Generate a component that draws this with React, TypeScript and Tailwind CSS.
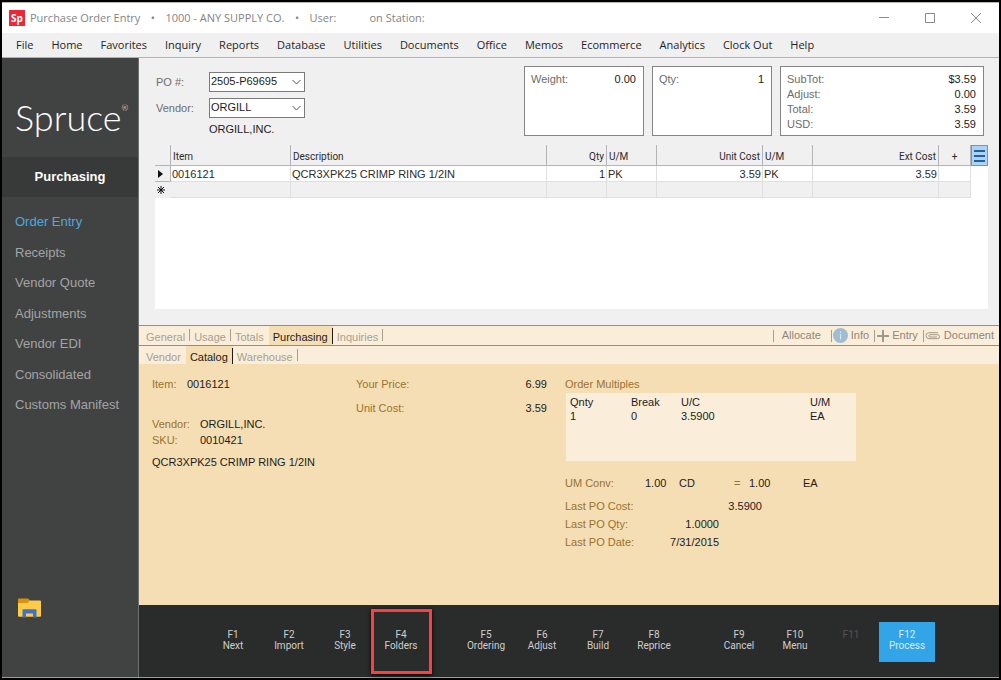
import { useState } from 'react'
import clsx from 'clsx'

const menuItems = [
  'File', 'Home', 'Favorites', 'Inquiry', 'Reports', 'Database', 'Utilities', 'Documents',
  'Office', 'Memos', 'Ecommerce', 'Analytics', 'Clock Out', 'Help',
]

const navItems = [
  'Order Entry', 'Receipts', 'Vendor Quote', 'Adjustments', 'Vendor EDI', 'Consolidated', 'Customs Manifest',
]

const functionKeys = [
  [
    { id: 'F1', label: 'Next' },
    { id: 'F2', label: 'Import' },
    { id: 'F3', label: 'Style' },
    { id: 'F4', label: 'Folders' },
  ],
  [
    { id: 'F5', label: 'Ordering' },
    { id: 'F6', label: 'Adjust' },
    { id: 'F7', label: 'Build' },
    { id: 'F8', label: 'Reprice' },
  ],
  [
    { id: 'F9', label: 'Cancel' },
    { id: 'F10', label: 'Menu' },
    { id: 'F11', label: '' },
    { id: 'F12', label: 'Process' },
  ],
]

function TitleBar() {
  return (
    <header className="flex h-[31px] items-center border-t border-[#b9b6ae] bg-white pl-[7px] font-['Open_Sans',sans-serif] text-[11px] text-[#858585]">
      <div className="flex size-4 items-center justify-center bg-[#ee2737] text-[10px] font-bold leading-none text-white">
        Sp
      </div>
      <h1 className="ml-[5px] flex whitespace-pre">
        <span>Purchase Order Entry</span>
        <span className="w-[25px] text-center">•</span>
        <span>1000 - ANY SUPPLY CO.</span>
        <span className="w-[25px] text-center">•</span>
        <span className="w-[60px]">User:</span>
        <span>on Station:</span>
      </h1>
      <div className="ml-auto flex">
        <button type="button" aria-label="Minimize" className="flex h-7 w-[46px] items-center justify-center">
          <svg width="11" height="11" viewBox="0 0 11 11" stroke="#8a8a8a" fill="none">
            <path d="M0 4.500h10" />
          </svg>
        </button>
        <button type="button" aria-label="Maximize" className="flex h-7 w-[46px] items-center justify-center">
          <svg width="11" height="11" viewBox="0 0 11 11" stroke="#8a8a8a" fill="none">
            <path d="M.5 .5h9v9h-9z" />
          </svg>
        </button>
        <button type="button" aria-label="Close" className="flex h-7 w-[46px] items-center justify-center">
          <svg width="11" height="11" viewBox="0 0 11 11" stroke="#8a8a8a" fill="none">
            <path d="M0 0l10 10M10 0L0 10" />
          </svg>
        </button>
      </div>
    </header>
  )
}

function MenuBar() {
  return (
    <nav className="flex h-[25px] items-center gap-[18px] border-b border-[#adb5b1] bg-[#f0f0f0] pl-[14px] font-['Open_Sans',sans-serif] text-[11px] text-[#1f1f1f]">
      {menuItems.map((item) => (
        <button key={item} type="button" className="whitespace-nowrap">{item}</button>
      ))}
    </nav>
  )
}

function Sidebar() {
  return (
    <aside className="flex w-[137px] shrink-0 flex-col border-r border-[#6f7070] bg-[#414342] text-[13px]">
      <div className="flex h-[99px] items-center pl-[13px] pt-[18px] font-['Lato',sans-serif] text-[36px] font-light leading-none text-white">
        Spruce
        <span className="self-start pt-7 text-[8px]">®</span>
      </div>
      <h2 className="flex h-10 items-center justify-center bg-[#383a39] font-bold text-white">Purchasing</h2>
      <ul className="mt-[10px] flex h-[213px] flex-col pl-[13px]">
        {navItems.map((item, i) => (
          <li key={item} className="flex flex-1 items-center">
            <a href="#" className={i === 0 ? 'text-[#4fa9dc]' : 'text-[#a3a4a4]'}>{item}</a>
          </li>
        ))}
      </ul>
      <button type="button" aria-label="Files" className="mb-[59px] ml-4 mt-auto w-[23px]">
        <svg width="23" height="20" viewBox="0 0 23 20">
          <path d="M0 1.500Q0 .5 1 .5h9l2 2V5H0z" fill="#d9930b" />
          <path d="M0 5h9.500l2-2.500H22Q23 2.500 23 3.500V18q0 .8-1 .8H1Q0 18.800 0 18z" fill="#fccb48" />
          <path d="M4.500 12q0-.8.8-.8h12.400q.8 0 .8.800v7.500H15V15.500H8v4H4.500z" fill="#3f72c9" />
        </svg>
      </button>
    </aside>
  )
}

function Combo({ id, value }: { id: string; value: string }) {
  return (
    <div className="relative w-24">
      <select id={id} defaultValue={value} className="h-5 w-full appearance-none rounded-none border border-[#7a7a7a] bg-white pb-0.5 pl-px text-[11px] leading-4 text-[#1c1c1c]">
        <option>{value}</option>
      </select>
      <svg className="pointer-events-none absolute right-1 top-1.5" width="9" height="8" viewBox="0 0 9 8" fill="none" stroke="#555">
        <path d="M.5 2l4 4 4-4" />
      </svg>
    </div>
  )
}

function Amount({ label, value }: { label: string; value: string }) {
  return (
    <div className="flex justify-between leading-[15px]">
      <dt className="text-[#6d6d6d]">{label}</dt>
      <dd className="text-[#1c1c1c]">{value}</dd>
    </div>
  )
}

function OrderHeader() {
  return (
    <section className="flex justify-between pl-[17px] pr-[15px] pt-2">
      <div className="grid grid-cols-[53px_auto] content-start items-center gap-y-1.5 pt-1.5 text-[#6d6d6d]">
        <label htmlFor="po">PO #:</label>
        <Combo id="po" value="2505-P69695" />
        <label htmlFor="vendor">Vendor:</label>
        <Combo id="vendor" value="ORGILL" />
        <span className="col-start-2 leading-[11px] text-[#1c1c1c]">ORGILL,INC.</span>
      </div>
      <div className="flex h-[70px] gap-2">
        <dl className="w-[120px] border border-[#858585] bg-white pl-1.5 pr-[7px] pt-[5px]">
          <Amount label="Weight:" value="0.00" />
        </dl>
        <dl className="w-[120px] border border-[#858585] bg-white pl-1.5 pr-[7px] pt-[5px]">
          <Amount label="Qty:" value="1" />
        </dl>
        <dl className="w-[204px] border border-[#858585] bg-white pl-1.5 pr-[7px] pt-[5px]">
          <Amount label="SubTot:" value="$3.59" />
          <Amount label="Adjust:" value="0.00" />
          <Amount label="Total:" value="3.59" />
          <Amount label="USD:" value="3.59" />
        </dl>
      </div>
    </section>
  )
}

function LineItems() {
  const head = 'border-r border-b border-[#b4b4b4] bg-[#f0f0f0] px-0.5 pt-0.5 font-normal'
  const cell = 'border-r border-b border-[#dfdfdf] px-px pt-px'
  return (
    <section className="ml-4 mr-[11px] mt-[9px] flex h-[164px] items-start bg-white">
      <table className="flex-1 table-fixed border-separate border-spacing-0 text-[#2b2b2b]">
        <colgroup>
          <col className="w-4" />
          <col className="w-[120px]" />
          <col />
          <col className="w-[60px]" />
          <col className="w-[50px]" />
          <col className="w-[106px]" />
          <col className="w-[50px]" />
          <col className="w-[126px]" />
          <col className="w-8" />
        </colgroup>
        <thead className="font-['Roboto',sans-serif] text-[10px]">
          <tr className="h-[21px]">
            <th className={head} />
            <th className={clsx(head, 'text-left')}>Item</th>
            <th className={clsx(head, 'text-left')}>Description</th>
            <th className={clsx(head, 'text-right')}>Qty</th>
            <th className={clsx(head, 'text-left')}>U/M</th>
            <th className={clsx(head, 'text-right')}>Unit Cost</th>
            <th className={clsx(head, 'text-left')}>U/M</th>
            <th className={clsx(head, 'text-right')}>Ext Cost</th>
            <th className={clsx(head, 'text-center')}>+</th>
          </tr>
        </thead>
        <tbody className="text-[11px] leading-[14px]">
          <tr className="h-4">
            <td className="border-r border-b border-[#b4b4b4] bg-[#f0f0f0]">
              <svg className="ml-[3px]" width="5" height="8" viewBox="0 0 5 8">
                <path d="M0 0l5 4-5 4z" fill="#111" />
              </svg>
            </td>
            <td className={cell}>0016121</td>
            <td className={cell}>QCR3XPK25 CRIMP RING 1/2IN</td>
            <td className={clsx(cell, 'text-right')}>1</td>
            <td className={cell}>PK</td>
            <td className={clsx(cell, 'text-right')}>3.59</td>
            <td className={cell}>PK</td>
            <td className={clsx(cell, 'text-right')}>3.59</td>
            <td className={cell} />
          </tr>
          <tr className="h-4 bg-[#f0f0f0]">
            <td>
              <svg className="ml-0.5" width="8" height="8" viewBox="0 0 8 8" stroke="#111" fill="none">
                <path d="M4 0v8M0 4h8M1 1l6 6M7 1l-6 6" />
              </svg>
            </td>
            <td className={cell} />
            <td className={cell} />
            <td className={cell} />
            <td className={cell} />
            <td className={cell} />
            <td className={cell} />
            <td className={cell} />
            <td className={cell} />
          </tr>
        </tbody>
      </table>
      <button type="button" aria-label="Grid options" className="flex h-[21px] w-[17px] items-center justify-center border border-[#7d93a6] bg-[#aed2f3]">
        <svg width="11" height="12" viewBox="0 0 11 12" fill="#1e62a0">
          <path d="M0 0h11v2H0zM0 5h11v2H0zM0 10h11v2H0z" />
        </svg>
      </button>
    </section>
  )
}

interface TabStripProps {
  tabs: string[]
  active: string
  onSelect: (tab: string) => void
}

function TabStrip({ tabs, active, onSelect }: TabStripProps) {
  return (
    <div role="tablist" className="flex h-full pl-[3px]">
      {tabs.map((tab, i) => (
        <button
          key={tab}
          type="button"
          role="tab"
          aria-selected={tab === active}
          onClick={() => onSelect(tab)}
          className={clsx('flex pl-1', tab === active ? 'bg-[#f5deb3] text-[#1c1c1c]' : 'text-[#a89f91]')}
        >
          <span className="pr-1 pt-1 leading-[15px]">{tab}</span>
          {tab === active ? (
            <span className="mt-0.5 h-4 w-px bg-[#1c1c1c]" />
          ) : (
            <span className={clsx('mt-[3px] h-3 w-px', tabs[i + 1] !== active && 'bg-[#a89f91]')} />
          )}
        </button>
      ))}
    </div>
  )
}

function Divider() {
  return <span className="h-3 w-px bg-[#a89f91]" />
}

function TabActions() {
  return (
    <div className="flex items-center pr-[5px] text-[#8f8678]">
      <Divider />
      <button type="button" className="pl-2 pr-[10px]">Allocate</button>
      <Divider />
      <button type="button" className="flex items-center gap-[3px] pl-px pr-[5px]">
        <svg width="15" height="15" viewBox="0 0 15 15">
          <circle cx="7.500" cy="7.500" r="7.500" fill="#9fbcd2" />
          <path d="M7.500 3.500v1.500M7.500 6v5.500" stroke="#dbe7ef" strokeWidth="1.200" />
        </svg>
        Info
      </button>
      <Divider />
      <button type="button" className="flex items-center gap-[3px] pl-0.5 pr-[5px]">
        <svg width="12" height="12" viewBox="0 0 12 12" stroke="#a3998a" strokeWidth="2">
          <path d="M6 0v12M0 6h12" />
        </svg>
        Entry
      </button>
      <Divider />
      <button type="button" className="flex items-center gap-[3px] pl-px">
        <svg width="16" height="8" viewBox="0 0 16 8" fill="none" stroke="#a3998a">
          <path d="M12 5H5A1 1 0 015 2.700h7.500a2 2 0 010 4H4A3 3 0 014 .7h9" />
        </svg>
        Document
      </button>
    </div>
  )
}

function CatalogDetails() {
  const label = 'text-[#9a7231]'
  return (
    <section className="flex flex-1 items-start bg-[#f5deb3] pl-[13px] pt-3 leading-4 text-[#1c1c1c]">
      <div className="w-[204px]">
        <div className="flex">
          <span className={clsx(label, 'w-[35px]')}>Item:</span>
          0016121
        </div>
        <div className="mt-6 grid grid-cols-[48px_auto]">
          <span className={label}>Vendor:</span>
          <span>ORGILL,INC.</span>
          <span className={label}>SKU:</span>
          <span>0010421</span>
        </div>
        <p className="mt-1.5 whitespace-nowrap">QCR3XPK25 CRIMP RING 1/2IN</p>
      </div>

      <dl className="grid w-[191px] grid-cols-2 gap-y-2">
        <dt className={label}>Your Price:</dt>
        <dd className="text-right">6.99</dd>
        <dt className={label}>Unit Cost:</dt>
        <dd className="text-right">3.59</dd>
      </dl>

      <div className="ml-[18px] w-[291px]">
        <h3 className={label}>Order Multiples</h3>
        <div className="ml-px mt-px h-[68px] bg-[#faeedb] pl-1 pt-0.5">
          <table className="w-full table-fixed text-left leading-[14px]">
            <thead>
              <tr>
                <th className="w-[61px] font-normal">Qnty</th>
                <th className="w-[50px] font-normal">Break</th>
                <th className="w-[129px] font-normal">U/C</th>
                <th className="font-normal">U/M</th>
              </tr>
            </thead>
            <tbody>
              <tr>
                <td>1</td>
                <td>0</td>
                <td>3.5900</td>
                <td>EA</td>
              </tr>
            </tbody>
          </table>
        </div>
        <div className="mt-[14px] grid grid-cols-[80px_34px_55px_15px_54px_auto]">
          <span className={label}>UM Conv:</span>
          <span>1.00</span>
          <span>CD</span>
          <span className={label}>=</span>
          <span>1.00</span>
          <span>EA</span>
        </div>
        <dl className="mt-1.5 grid grid-cols-[84px_70px_43px] leading-[18px]">
          <dt className={label}>Last PO Cost:</dt>
          <dd className="col-span-2 text-right">3.5900</dd>
          <dt className={clsx(label, 'col-start-1')}>Last PO Qty:</dt>
          <dd className="text-right">1.0000</dd>
          <dt className={clsx(label, 'col-start-1')}>Last PO Date:</dt>
          <dd className="text-right">7/31/2015</dd>
        </dl>
      </div>
    </section>
  )
}

function keyStyle(id: string, label: string) {
  if (id === 'F12') return 'bg-[#32a4e8] text-[#d9effc]'
  return label ? 'text-[#cfcfcf]' : 'text-[#555555]'
}

function FunctionBar() {
  return (
    <footer className="flex h-[72px] items-center gap-[29px] bg-[#2a2b2b] pl-[66px] pt-0.5 font-['Roboto',sans-serif] text-[10px] leading-[11px]">
      {functionKeys.map((group) => (
        <div key={group[0].id} className="flex">
          {group.map(({ id, label }) => (
            <button
              key={id}
              type="button"
              disabled={!label}
              className={clsx('relative flex h-10 w-14 flex-col items-center pt-[7px]', keyStyle(id, label))}
            >
              <span>{id}</span>
              <span>{label}</span>
              {id === 'F4' && (
                <span className="absolute -bottom-3 -left-0.5 -right-[3px] -top-[13px] border-3 border-[#f94144] shadow-[0_1px_4px_#000]" />
              )}
            </button>
          ))}
        </div>
      ))}
    </footer>
  )
}

export default function App() {
  const [tab, setTab] = useState('Purchasing')
  const [subTab, setSubTab] = useState('Catalog')

  return (
    <div className="flex min-h-screen flex-col border-2 border-black bg-[#f0f0f0] font-['Liberation_Sans',Arial,sans-serif] text-[11px]">
      <TitleBar />
      <MenuBar />
      <div className="flex flex-1 border-b border-[#9a9e9e]">
        <Sidebar />
        <main className="flex min-w-0 flex-1 flex-col">
          <div className="h-[267px]">
            <OrderHeader />
            <LineItems />
          </div>
          <div className="flex h-[21px] justify-between border-y border-[#b08a4f] bg-[#faeedb]">
            <TabStrip tabs={['General', 'Usage', 'Totals', 'Purchasing', 'Inquiries']} active={tab} onSelect={setTab} />
            <TabActions />
          </div>
          <div className="h-[18px] bg-[#faeedb]">
            <TabStrip tabs={['Vendor', 'Catalog', 'Warehouse']} active={subTab} onSelect={setSubTab} />
          </div>
          <CatalogDetails />
          <FunctionBar />
        </main>
      </div>
    </div>
  )
}
